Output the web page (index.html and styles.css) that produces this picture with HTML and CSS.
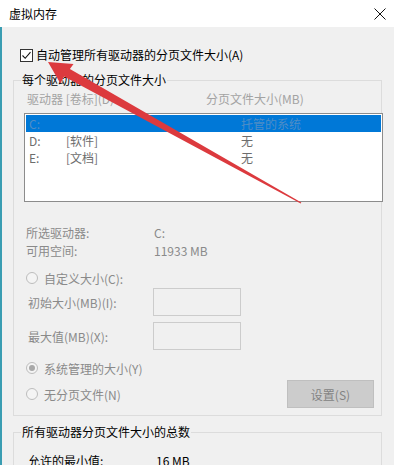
FILE: index.html
```html
<!DOCTYPE html>
<html lang="zh-CN">
<head>
    <meta charset="UTF-8">
    <meta name="viewport" content="width=device-width, initial-scale=1.0">
    <title>虚拟内存</title>
    <link rel="stylesheet" href="styles.css">
</head>
<body>
    <div class="window">
        <div class="titlebar">
            <span class="title">虚拟内存</span>
            <svg class="close" width="12" height="12" viewBox="0 0 12 12">
                <path d="M0.5 0.5 L11.5 11.5 M11.5 0.5 L0.5 11.5" stroke="#111" stroke-width="1" fill="none"/>
            </svg>
        </div>

        <div class="content">
            <label class="auto">
                <svg class="checkbox" width="13" height="13" viewBox="0 0 13 13">
                    <rect x="0.5" y="0.5" width="12" height="12" fill="#fff" stroke="#333"/>
                    <path d="M2.5 6.5 L5.2 9.3 L10.5 3.2" stroke="#111" stroke-width="1.1" fill="none"/>
                </svg>
                <span>自动管理所有驱动器的分页文件大小(A)</span>
            </label>

            <fieldset class="group drives">
                <legend>每个驱动器的分页文件大小</legend>
                <div class="cols">
                    <span class="col-drive">驱动器 [卷标](D)</span>
                    <span>分页文件大小(MB)</span>
                </div>
                <div class="listbox">
                    <div class="row selected"><span class="c1">C:</span><span class="c2"></span><span>托管的系统</span></div>
                    <div class="row"><span class="c1">D:</span><span class="c2">[软件]</span><span>无</span></div>
                    <div class="row"><span class="c1">E:</span><span class="c2">[文档]</span><span>无</span></div>
                </div>

                <div class="info">
                    <span>所选驱动器:</span><span>C:</span>
                    <span>可用空间:</span><span>11933 MB</span>
                </div>

                <div class="radio custom">
                    <span class="dot"></span>
                    <span>自定义大小(C):</span>
                </div>
                <div class="size-row first">
                    <span class="size-label">初始大小(MB)(I):</span>
                    <span class="field"></span>
                </div>
                <div class="size-row">
                    <span class="size-label">最大值(MB)(X):</span>
                    <span class="field"></span>
                </div>

                <div class="radio system">
                    <span class="dot checked"></span>
                    <span>系统管理的大小(Y)</span>
                </div>
                <div class="last-row">
                    <div class="radio">
                        <span class="dot"></span>
                        <span>无分页文件(N)</span>
                    </div>
                    <button class="set-btn" disabled>设置(S)</button>
                </div>
            </fieldset>

            <fieldset class="group totals">
                <legend>所有驱动器分页文件大小的总数</legend>
                <div class="total-row">
                    <span class="total-label">允许的最小值:</span>
                    <span>16 MB</span>
                </div>
            </fieldset>
        </div>

        <svg class="arrow" width="394" height="465" viewBox="0 0 394 465">
            <polygon points="48,62 73.5,64 69.9,69.0 301.3,202.6 300.7,203.4 64.1,76.4 60.4,83.4" fill="#dc3a3e"/>
        </svg>
    </div>
</body>
</html>
```

FILE: styles.css
```css
body {
    margin: 0;
    padding: 0;
    background-color: #f0f0f0;
    font-family: "Noto Sans CJK SC", "Microsoft YaHei", sans-serif;
    font-size: 12px;
    color: #000;
}

.window {
    position: relative;
    width: 394px;
    height: 465px;
    overflow: hidden;
    background-color: #f0f0f0;
}

.titlebar {
    height: 27px;
    background-color: #fff;
    display: flex;
    align-items: center;
    justify-content: space-between;
    padding: 0 8px 0 9px;
}

.title {
    line-height: 16px;
    margin-top: 1px;
}

.close {
    display: block;
}

.content {
    border-left: 2px solid #3a9db2;
    padding: 21px 12px 0 11px;
    height: 438px;
}

.auto {
    display: flex;
    align-items: center;
    gap: 3px;
    height: 14px;
    margin-left: 7px;
    line-height: 16px;
}

.checkbox {
    display: block;
}

.group {
    margin: 0;
    border: 1px solid #dcdcdc;
    padding: 0 0 0 10px;
    min-width: 0;
}

.group legend {
    padding: 0 1px;
    margin-left: -3px;
    line-height: 16px;
}

.drives {
    margin-top: 10px;
    padding-bottom: 7px;
}

.cols {
    display: flex;
    padding-left: 3px;
    margin-top: 3px;
    line-height: 16px;
    color: #a3a3a3;
}

.col-drive {
    width: 179px;
}

.listbox {
    margin-top: 6px;
    margin-right: -2px;
    height: 85px;
    border: 1px solid #8c8c8c;
    padding: 1px;
    background-color: #fff;
}

.row {
    display: flex;
    height: 17px;
    line-height: 17px;
    padding-left: 3px;
    color: #6d6d6d;
}

.row.selected {
    background-color: #0078d7;
    color: #4f8dc6;
}

.c1 {
    width: 37px;
}

.c2 {
    width: 175px;
}

.info {
    display: grid;
    grid-template-columns: 128px 1fr;
    margin-top: 22px;
    padding-left: 2px;
    line-height: 18px;
    color: #8a8a8a;
}

.radio {
    display: flex;
    align-items: center;
    gap: 6px;
    height: 18px;
    padding-left: 2px;
    color: #8a8a8a;
}

.dot {
    width: 10px;
    height: 10px;
    border: 1px solid #bdbdbd;
    border-radius: 50%;
    background-color: #f4f4f4;
    position: relative;
}

.dot.checked::after {
    content: "";
    position: absolute;
    left: 2px;
    top: 2px;
    width: 6px;
    height: 6px;
    border-radius: 50%;
    background-color: #a8a8a8;
}

.custom {
    margin-top: 9px;
}

.size-row {
    display: flex;
    align-items: center;
    padding-left: 4px;
    margin-top: 6px;
    color: #8a8a8a;
}

.size-row.first {
    margin-top: 1px;
}

.size-label {
    width: 125px;
}

.field {
    width: 86px;
    height: 26px;
    border: 1px solid #cccccc;
    background-color: #f0f0f0;
}

.system {
    margin-top: 9px;
}

.last-row {
    display: flex;
    align-items: center;
    justify-content: space-between;
    margin-top: 3px;
    height: 28px;
}

.set-btn {
    width: 87px;
    height: 28px;
    margin-right: 7px;
    border: 1px solid #bfbfbf;
    background-color: #cccccc;
    color: #838383;
    font-family: inherit;
    font-size: 12px;
    padding: 0;
}

.totals {
    margin-top: 8px;
    height: 60px;
}

.total-row {
    display: flex;
    padding-left: 4px;
    margin-top: 13px;
    line-height: 16px;
}

.total-label {
    width: 128px;
}

.arrow {
    position: absolute;
    top: 0;
    left: 0;
    pointer-events: none;
}
```
